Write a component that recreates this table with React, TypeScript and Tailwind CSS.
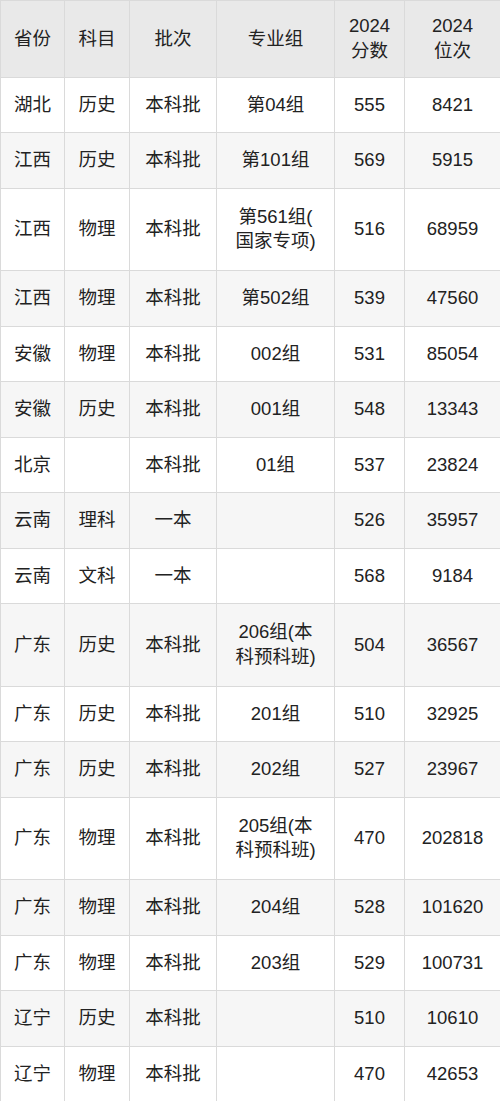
import React from 'react';

type Row = [string, string, string, React.ReactNode, string, string];

const rows: Row[] = [
  ['湖北', '历史', '本科批', '第04组', '555', '8421'],
  ['江西', '历史', '本科批', '第101组', '569', '5915'],
  ['江西', '物理', '本科批', <>第561组(<br />国家专项)</>, '516', '68959'],
  ['江西', '物理', '本科批', '第502组', '539', '47560'],
  ['安徽', '物理', '本科批', '002组', '531', '85054'],
  ['安徽', '历史', '本科批', '001组', '548', '13343'],
  ['北京', '', '本科批', '01组', '537', '23824'],
  ['云南', '理科', '一本', '', '526', '35957'],
  ['云南', '文科', '一本', '', '568', '9184'],
  ['广东', '历史', '本科批', <>206组(本<br />科预科班)</>, '504', '36567'],
  ['广东', '历史', '本科批', '201组', '510', '32925'],
  ['广东', '历史', '本科批', '202组', '527', '23967'],
  ['广东', '物理', '本科批', <>205组(本<br />科预科班)</>, '470', '202818'],
  ['广东', '物理', '本科批', '204组', '528', '101620'],
  ['广东', '物理', '本科批', '203组', '529', '100731'],
  ['辽宁', '历史', '本科批', '', '510', '10610'],
  ['辽宁', '物理', '本科批', '', '470', '42653'],
];

const widths = ['w-[64px]', 'w-[65px]', 'w-[87px]', 'w-[118px]', 'w-[70px]', 'w-[96px]'];

export default function App() {
  return (
    <div className="w-[500px] bg-white">
      <table
        className="w-[500px] table-fixed border-collapse text-center text-[18.5px] leading-[24.5px] text-[#222]"
        style={{ fontFamily: '"Liberation Sans", "Noto Sans CJK SC", sans-serif' }}
      >
        <colgroup>
          {widths.map((w) => (
            <col key={w} className={w} />
          ))}
        </colgroup>
        <thead>
          <tr className="h-[76.5px] bg-[#e9e9e9]">
            {['省份', '科目', '批次', '专业组'].map((h) => (
              <th key={h} className="border border-[#dadada] p-0 font-normal">
                {h}
              </th>
            ))}
            <th className="border border-[#dadada] p-0 font-normal">
              2024
              <br />
              分数
            </th>
            <th className="border border-[#dadada] p-0 font-normal">
              2024
              <br />
              位次
            </th>
          </tr>
        </thead>
        <tbody>
          {rows.map((r, i) => {
            const tall = typeof r[3] !== 'string';
            return (
              <tr
                key={i}
                className={`${tall ? 'h-[82.5px]' : 'h-[55.5px]'} ${i % 2 === 1 ? 'bg-[#f6f6f6]' : 'bg-white'}`}
              >
                {r.map((c, j) => (
                  <td key={j} className="border border-[#dadada] px-1 py-0">
                    {c}
                  </td>
                ))}
              </tr>
            );
          })}
        </tbody>
      </table>
    </div>
  );
}
